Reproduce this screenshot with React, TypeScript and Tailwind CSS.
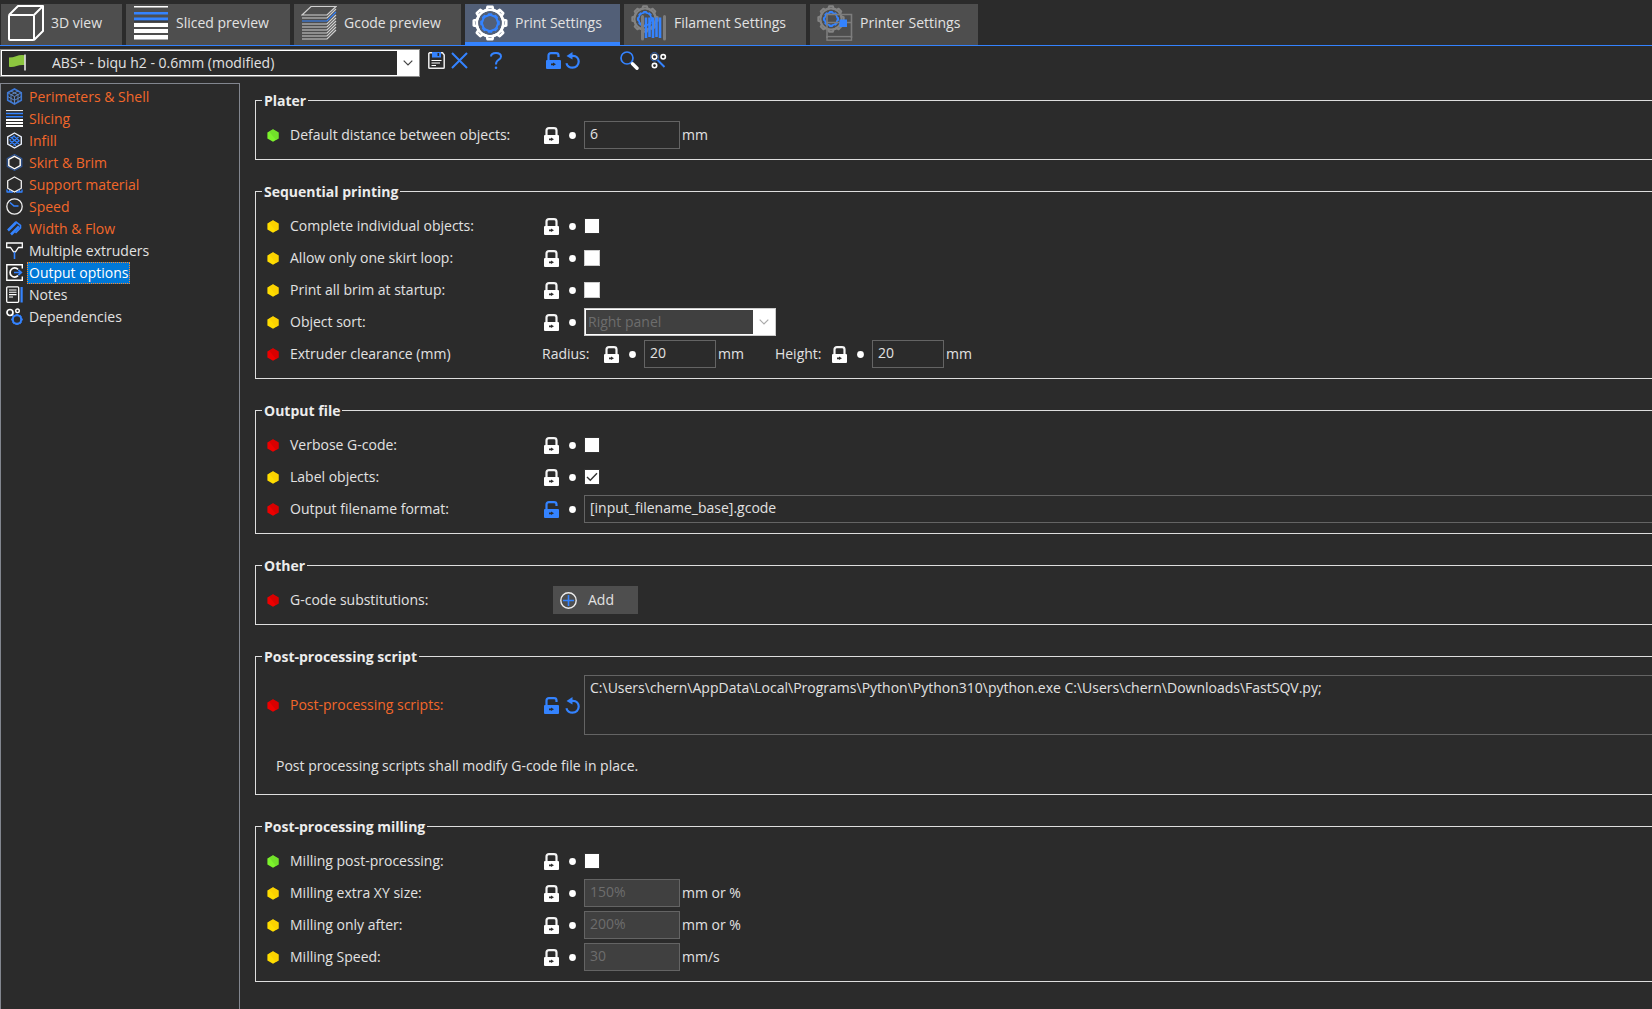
import { useState, type ReactNode } from "react"
import clsx from "clsx"

const BLUE = "#3483ff"

/* ---------- small icons ---------- */

const LockIcon = ({ open }: { open?: boolean }) => (
  <svg width="15" height="17" viewBox="0 0 15 17" fill="none">
    <path
      d={open ? "M2.5 8V3.5Q2.5 1.2 5 1.2H10Q12.5 1.2 12.5 3.5V5" : "M2.5 8V3.5Q2.5 1.2 5 1.2H10Q12.5 1.2 12.5 3.5V8"}
      stroke={open ? BLUE : "#f4f4f4"}
      strokeWidth="2.2"
    />
    <rect y="8" width="15" height="9" rx="1" fill={open ? BLUE : "#fff"} />
    <path d="M5 11.5H7V10.5L10 12.3L7 14V13.2H5Z" fill="#2b2b2b" />
  </svg>
)

const UndoIcon = () => (
  <svg width="15" height="17" viewBox="0 0 15 17" fill="none">
    <path d="M5 3.8H8C11.5 3.8 13.7 6.4 13.7 9.6C13.7 13 11 15.7 7.6 15.7C4.6 15.7 2.2 13.8 1.4 11.2" stroke={BLUE} strokeWidth="2.2" />
    <path d="M1.5 4L7.5 0V7.6Z" fill={BLUE} />
  </svg>
)

const DotIcon = () => (
  <svg width="7" height="7" viewBox="0 0 7 7">
    <circle cx="3.5" cy="3.5" r="3.4" fill="#fff" />
  </svg>
)

const modeColors = {
  simple: ["#7cf32c", "#6cd62a"],
  advanced: ["#ffdd00", "#f8cc00"],
  expert: ["#ee0000", "#cc0000"],
}

type Mode = keyof typeof modeColors

const ModeIcon = ({ mode }: { mode: Mode }) => (
  <svg width="12" height="13" viewBox="0 0 12 13" className="shrink-0">
    <path d="M6 0.3L11.6 3.4V9.6L6 12.7L0.4 9.6V3.4Z" fill={modeColors[mode][0]} />
    <path d="M6 0.3L11.6 3.4V9.6L9 11L2 2.5Z" fill={modeColors[mode][1]} opacity="0.6" />
  </svg>
)

const Chevron = ({ color }: { color: string }) => (
  <svg width="10" height="6" viewBox="0 0 10 6" fill="none">
    <path d="M0.7 0.7L5 5L9.3 0.7" stroke={color} strokeWidth="1.2" />
  </svg>
)

/* ---------- tab icons ---------- */

const gearPath = (cx: number, cy: number, r: number, tooth: number) => {
  const points: string[] = []
  for (let i = 0; i < 8; i++) {
    const base = (i * Math.PI) / 4
    const steps: [number, number][] = [[-0.24, r], [-0.15, r + tooth], [0.15, r + tooth], [0.24, r]]
    steps.forEach(([a, d]) => {
      points.push(`${(cx + Math.sin(base + a) * d).toFixed(2)} ${(cy - Math.cos(base + a) * d).toFixed(2)}`)
    })
  }
  return `M${points.join("L")}Z`
}

const CubeTabIcon = () => (
  <svg width="36" height="36" viewBox="0 0 36 36" fill="none" stroke="#fff" strokeWidth="2" strokeLinejoin="round">
    <rect x="1" y="10" width="25" height="25" rx="1" />
    <path d="M1 10L10 1H35L26 10M35 1V26L26 35" />
  </svg>
)

const SlicedTabIcon = () => (
  <svg width="36" height="36" viewBox="0 0 36 36">
    <path d="M1 1H35V2.4H1ZM1 18H35V22H1ZM1 24H35V28H1ZM1 30H35V34.5H1Z" fill="#fff" />
    <path d="M1 7H35V9.4H1ZM1 12.6H35V15.6H1Z" fill={BLUE} />
    <path d="M1 15.6H35V16.6H1Z" fill="#111" opacity="0.5" />
  </svg>
)

const GcodeTabIcon = () => (
  <svg width="36" height="36" viewBox="0 0 36 36" fill="none" stroke="#d0d0d0" strokeWidth="1.2">
    <path d="M1 10L10 1.5H35L26 10Z" />
    {[13, 19, 22, 25, 28, 31, 34].map(y => (
      <path key={y} d={`M1 ${y}H26L35 ${y - 9}`} />
    ))}
    <path d="M1 16H26L35 7" stroke={BLUE} />
  </svg>
)

const PrintTabIcon = () => (
  <svg width="36" height="36" viewBox="0 0 36 36" fill="none">
    <path d={gearPath(18, 18, 13.4, 3)} stroke="#fff" strokeWidth="2.6" strokeLinejoin="round" />
    <circle cx="18" cy="18" r="13.2" stroke="#fff" strokeWidth="2.6" />
    <path d={gearPath(18, 18, 7.8, 1.2)} stroke={BLUE} strokeWidth="1.8" strokeLinejoin="round" />
    <circle cx="18" cy="18" r="7.8" stroke={BLUE} strokeWidth="1.6" />
  </svg>
)

const SmallGears = () => (
  <>
    <path d={gearPath(14, 14, 10.8, 2)} stroke="#848484" strokeWidth="2" strokeLinejoin="round" />
    <circle cx="14" cy="14" r="10.6" stroke="#848484" strokeWidth="2" />
    <path d={gearPath(14, 14, 6.4, 1)} stroke={BLUE} strokeWidth="1.4" />
    <circle cx="14" cy="14" r="6.4" stroke={BLUE} strokeWidth="1.2" />
  </>
)

const FilamentTabIcon = () => (
  <svg width="36" height="36" viewBox="0 0 36 36" fill="none">
    <SmallGears />
    <path d="M11.5 11.5V34M33.5 11.5V34" stroke="#7d7d7d" strokeWidth="3" strokeLinecap="round" />
    <path d="M15 12.5V33M18.5 12.5V32M22 12.5V33M25.5 12.5V32M29 12.5V33" stroke={BLUE} strokeWidth="2.6" />
  </svg>
)

const PrinterTabIcon = () => (
  <svg width="36" height="36" viewBox="0 0 36 36" fill="none">
    <SmallGears />
    <path d="M10 33V9.5H34.5V33M10 17.5H34.5" stroke="#7d7d7d" strokeWidth="1.6" />
    <rect x="10" y="31.6" width="24.5" height="3.6" stroke="#7d7d7d" strokeWidth="1.4" />
    <rect x="22.5" y="14.5" width="7.5" height="7.5" fill={BLUE} />
  </svg>
)

/* ---------- page list icons ---------- */

const hexagon = "M8.5 1L15.3 4.8V12.2L8.5 16L1.7 12.2V4.8Z"

const pageIcons: Record<string, ReactNode> = {
  perimeters: (
    <>
      <path d={hexagon} stroke="#3b78d8" strokeWidth="1.6" />
      <path d="M1.7 4.8L8.5 8.5L15.3 4.8M8.5 8.5V16M5 3L12 6.8M12 3L5 6.8V14M12 6.8V14M1.7 8.5L8.5 12.3L15.3 8.5" stroke="#5d84bf" />
    </>
  ),
  slicing: (
    <>
      <path d="M0 0.6H17" stroke="#fff" />
      <path d="M0 3.5H17M0 6.8H17" stroke={BLUE} strokeWidth="1.6" />
      <path d="M0 10H17M0 13H17M0 16H17" stroke="#fff" strokeWidth="2" />
    </>
  ),
  infill: (
    <>
      <path d={hexagon} stroke="#e8eefa" strokeWidth="1.4" />
      <path d="M4.5 5L13 12M3.8 8.5L10 13.8M7.5 3.8L13.5 9M12.5 5L4 12M8.5 3.5L3.5 8M13.5 8.5L7.5 13.5" stroke={BLUE} strokeWidth="1.2" />
    </>
  ),
  skirt: (
    <>
      <path d="M8.5 0.6L15.8 4.6V12.4L8.5 16.4L1.2 12.4V4.6Z" stroke="#2f5aa0" strokeWidth="1.1" />
      <path d="M8.5 2.4L14.2 5.5V11.7L8.5 14.8L2.8 11.7V5.5Z" stroke="#fff" strokeWidth="1.4" />
    </>
  ),
  support: (
    <>
      <path d="M1 16.5V13.5M3.6 16.5V14M6.2 16.5V15M10.8 16.5V15M13.4 16.5V14M16 16.5V13.5M1 16H7M10 16H16" stroke={BLUE} strokeWidth="1.3" />
      <path d={hexagon} stroke="#f2f2f2" strokeWidth="1.3" />
    </>
  ),
  speed: (
    <>
      <circle cx="8.5" cy="8.5" r="7.7" stroke="#f0f0f0" strokeWidth="1.3" />
      <path d="M4 4.5L8 8H12.5" stroke={BLUE} strokeWidth="1.5" />
    </>
  ),
  width: (
    <>
      <path d="M2 10.5L10 2.5M5 14.5L13 6.5" stroke={BLUE} strokeWidth="2.6" />
      <path d="M9.5 1.5L14.5 5.5V8L9.5 13" stroke={BLUE} strokeWidth="1.6" />
    </>
  ),
  extruders: (
    <>
      <path d="M0.7 1H16.3V5.5H12.5L9.5 9.8H7.5L4.5 5.5H0.7Z" stroke="#fff" strokeWidth="1.3" />
      <path d="M8.5 10V17" stroke={BLUE} strokeWidth="1.6" />
    </>
  ),
  output: (
    <>
      <path d="M16.3 4.5V0.8H0.8V16.2H16.3V12.5" stroke="#fff" strokeWidth="1.4" />
      <path d="M12 5.3A4.6 4.6 0 1 0 12 11.7" stroke="#fff" strokeWidth="1.7" />
      <path d="M8 8.5H15M12.3 5.8L15.3 8.5L12.3 11.2" stroke={BLUE} strokeWidth="1.7" />
    </>
  ),
  notes: (
    <>
      <rect x="0.7" y="0.8" width="12" height="15.5" rx="1" stroke="#fff" strokeWidth="1.3" />
      <path d="M3 4H10.5M3 6.3H10.5M3 8.6H10.5M3 11H7" stroke="#fff" strokeWidth="1.1" />
      <path d="M15.6 1V16.5" stroke={BLUE} strokeWidth="2.2" />
    </>
  ),
  dependencies: (
    <>
      <circle cx="4" cy="4.5" r="3" stroke="#fff" strokeWidth="1.7" />
      <circle cx="11.5" cy="2.8" r="1.8" stroke="#fff" strokeWidth="1.4" />
      <circle cx="11" cy="11.5" r="4.2" stroke={BLUE} strokeWidth="2" />
      <path d={gearPath(11, 11.5, 4.4, 0.9)} stroke={BLUE} strokeWidth="1" />
    </>
  ),
}

const tabs = [
  { label: "3D view", icon: <CubeTabIcon />, width: "w-[121px]" },
  { label: "Sliced preview", icon: <SlicedTabIcon />, width: "w-[164px]" },
  { label: "Gcode preview", icon: <GcodeTabIcon />, width: "w-[167px]" },
  { label: "Print Settings", icon: <PrintTabIcon />, width: "w-[155px]" },
  { label: "Filament Settings", icon: <FilamentTabIcon />, width: "w-[182px]" },
  { label: "Printer Settings", icon: <PrinterTabIcon />, width: "w-[168px]" },
]

const pages = [
  { label: "Perimeters & Shell", icon: "perimeters", modified: true },
  { label: "Slicing", icon: "slicing", modified: true },
  { label: "Infill", icon: "infill", modified: true },
  { label: "Skirt & Brim", icon: "skirt", modified: true },
  { label: "Support material", icon: "support", modified: true },
  { label: "Speed", icon: "speed", modified: true },
  { label: "Width & Flow", icon: "width", modified: true },
  { label: "Multiple extruders", icon: "extruders" },
  { label: "Output options", icon: "output" },
  { label: "Notes", icon: "notes" },
  { label: "Dependencies", icon: "dependencies" },
]

/* ---------- form parts ---------- */

const Group = ({ title, children }: { title: string; children: ReactNode }) => (
  <fieldset className="mb-[22px] min-w-0 border border-r-0 border-[#dedede] pb-2">
    <legend className="ml-[6px] h-[19px] px-0.5 font-bold leading-[19px] text-[#ececec]">{title}</legend>
    <div className="pt-[9px]">{children}</div>
  </fieldset>
)

interface RowProps {
  id?: string
  label: string
  mode: Mode
  modified?: boolean
  tall?: boolean
  children: ReactNode
}

const Row = ({ id, label, mode, modified, tall, children }: RowProps) => (
  <div className={clsx("flex items-center pl-[11px]", tall ? "h-[60px]" : "h-8")}>
    <ModeIcon mode={mode} />
    <label htmlFor={id} className={clsx("ml-[11px] w-[252px] shrink-0", modified && "text-[#f2672a]")}>
      {label}
    </label>
    {children}
  </div>
)

const Marks = ({ unlocked, undo }: { unlocked?: boolean; undo?: boolean }) => (
  <div className="ml-0.5 flex w-10 shrink-0 items-center">
    <button type="button" aria-label="Lock value">
      <LockIcon open={unlocked} />
    </button>
    {undo ? (
      <button type="button" aria-label="Revert value" className="ml-[6px]">
        <UndoIcon />
      </button>
    ) : (
      <span className="ml-[10px]">
        <DotIcon />
      </span>
    )}
  </div>
)

const TextField = ({ id, value, wide, disabled }: { id: string; value: string; wide?: string; disabled?: boolean }) => (
  <input
    id={id}
    type="text"
    defaultValue={value}
    disabled={disabled}
    className={clsx(
      "h-7 border border-[#646464] pb-1 pl-[5px] leading-5 outline-none",
      disabled ? "bg-[#404040] text-[#6d6d6d]" : "bg-transparent",
      wide ?? "w-24"
    )}
  />
)

const CheckBox = ({ id, checked, disabled }: { id: string; checked?: boolean; disabled?: boolean }) => (
  <span className="relative flex">
    <input
      id={id}
      type="checkbox"
      defaultChecked={checked}
      disabled={disabled}
      className="peer size-4 appearance-none border border-[#333333] bg-white disabled:border-[#cccccc]"
    />
    <svg className="pointer-events-none absolute inset-0 hidden peer-checked:block" width="16" height="16" viewBox="0 0 16 16" fill="none">
      <path d="M3 8L6.3 11.3L13 4.2" stroke="#333" strokeWidth="1.4" />
    </svg>
  </span>
)

const Unit = ({ children }: { children: ReactNode }) => <span className="ml-0.5 shrink-0">{children}</span>

const Toolbar = () => (
  <div className="flex h-[37px] items-start pt-[3px]">
    <div className="relative w-[420px] shrink-0 border border-[#8c8c8c] bg-white p-px">
      <select aria-label="Print preset" className="block h-6 w-full appearance-none bg-[#2b2b2b] pl-[50px] leading-6 outline-none">
        <option>ABS+ - biqu h2 - 0.6mm (modified)</option>
      </select>
      <svg className="pointer-events-none absolute left-2 top-1" width="18" height="17" viewBox="0 0 18 17">
        <path d="M0 3.5Q4 3.5 7 2.2Q11 0.6 15.5 1.2V11Q11 10.5 7.5 12Q4 13.4 0 12.8Z" fill="#8cc63f" />
        <path d="M16 0.5V16.5" stroke="#fff" strokeWidth="1.4" />
      </svg>
      <span className="pointer-events-none absolute inset-y-0 right-0 flex w-[22px] items-center justify-center bg-white">
        <Chevron color="#444" />
      </span>
    </div>
    <div className="flex h-5 items-center pt-0.5">
      <button type="button" aria-label="Save preset" className="ml-2">
        <svg width="17" height="17" viewBox="0 0 17 17" fill="none">
          <path d="M0.8 1.6V15.4Q0.8 16.2 1.6 16.2H15.4Q16.2 16.2 16.2 15.4V3L14.5 0.8H1.6Z" stroke="#ececec" strokeWidth="1.5" />
          <rect x="4" y="0" width="9" height="5.5" fill={BLUE} />
          <rect x="9.5" y="1" width="1.6" height="3" fill="#2b2b2b" />
          <path d="M3.5 8.5H13.5M3.5 11H12M3.5 13.5H8" stroke="#fff" strokeWidth="1.2" />
        </svg>
      </button>
      <button type="button" aria-label="Delete preset" className="ml-[6px]">
        <svg width="17" height="17" viewBox="0 0 17 17" fill="none">
          <path d="M1 1L16 16M16 1L1 16" stroke={BLUE} strokeWidth="2" />
        </svg>
      </button>
      <button type="button" aria-label="Help" className="ml-[22px]">
        <svg width="12" height="17" viewBox="0 0 12 17" fill="none">
          <path d="M1 4.5Q1 1 6 1Q11 1 11 4.5Q11 6.6 8.3 8Q6 9.3 6 12.5" stroke={BLUE} strokeWidth="2" />
          <circle cx="6" cy="15.7" r="1.3" fill={BLUE} />
        </svg>
      </button>
      <button type="button" aria-label="Unlock all values" className="ml-11">
        <LockIcon open />
      </button>
      <button type="button" aria-label="Revert all values" className="ml-1">
        <UndoIcon />
      </button>
      <button type="button" aria-label="Search" className="ml-10">
        <svg width="19" height="19" viewBox="0 0 19 19" fill="none">
          <circle cx="7" cy="7" r="6" stroke={BLUE} strokeWidth="1.7" />
          <path d="M12.5 12.8L17 17.3" stroke="#fff" strokeWidth="3.4" strokeLinecap="round" />
        </svg>
      </button>
      <button type="button" aria-label="Compare presets" className="ml-[11px]">
        <svg width="17" height="17" viewBox="0 0 17 17" fill="none">
          <circle cx="4.5" cy="4.8" r="4.2" stroke="#2f62b5" strokeWidth="1" />
          <path d="M7.5 8L14.5 15" stroke={BLUE} strokeWidth="2" />
          <circle cx="4.5" cy="4.8" r="2.3" stroke="#fff" strokeWidth="1.6" />
          <circle cx="13.2" cy="4.8" r="2.2" stroke="#fff" strokeWidth="1.6" />
          <circle cx="4.5" cy="13.6" r="2.2" stroke="#fff" strokeWidth="1.6" />
        </svg>
      </button>
    </div>
  </div>
)

const App = () => {
  const [activeTab, setActiveTab] = useState("Print Settings")
  const [activePage, setActivePage] = useState("Output options")

  return (
    <div className="flex min-h-screen flex-col overflow-hidden bg-[#2b2b2b] font-['Open_Sans','Noto_Sans',sans-serif] text-sm leading-5 text-[#e2e2e2]">
      <nav className="flex gap-1 border-b border-[#3483ff] pl-px pt-1">
        {tabs.map(tab => (
          <button
            key={tab.label}
            type="button"
            onClick={() => setActiveTab(tab.label)}
            className={clsx(
              "flex h-[41px] shrink-0 items-center gap-[7px] whitespace-nowrap border-b-[3px] pl-[7px]",
              tab.width,
              activeTab === tab.label ? "border-[#3483ff] bg-[#525f77]" : "border-[#4e4e4e] bg-[#4e4e4e]"
            )}
          >
            {tab.icon}
            {tab.label}
          </button>
        ))}
      </nav>

      <Toolbar />

      <div className="flex flex-1">
        <aside className="w-60 shrink-0 border border-b-0 border-[#82868f] pt-0.5">
          <ul>
            {pages.map(page => (
              <li key={page.label} className="flex h-[22px] items-center pl-[5px]">
                <svg width="17" height="17" viewBox="0 0 17 17" fill="none" className="mb-0.5">
                  {pageIcons[page.icon]}
                </svg>
                <button
                  type="button"
                  onClick={() => setActivePage(page.label)}
                  className={clsx(
                    "ml-1 h-[22px] whitespace-nowrap border border-dotted px-px",
                    activePage === page.label ? "border-[#ff8728] bg-[#0078d7] text-white" : "border-transparent",
                    page.modified && activePage !== page.label && "text-[#f2672a]"
                  )}
                >
                  {page.label}
                </button>
              </li>
            ))}
          </ul>
        </aside>

        <main className="min-w-0 flex-1 pl-[15px] pt-2">
          <Group title="Plater">
            <Row id="distance" label="Default distance between objects:" mode="simple">
              <Marks />
              <TextField id="distance" value="6" />
              <Unit>mm</Unit>
            </Row>
          </Group>

          <Group title="Sequential printing">
            <Row id="complete" label="Complete individual objects:" mode="advanced">
              <Marks />
              <CheckBox id="complete" />
            </Row>
            <Row id="skirt-loop" label="Allow only one skirt loop:" mode="advanced">
              <Marks />
              <CheckBox id="skirt-loop" disabled />
            </Row>
            <Row id="brim" label="Print all brim at startup:" mode="advanced">
              <Marks />
              <CheckBox id="brim" disabled />
            </Row>
            <Row id="sort" label="Object sort:" mode="advanced">
              <Marks />
              <div className="relative w-48 border border-[#cccccc] bg-white p-px">
                <select id="sort" disabled className="block h-6 w-full appearance-none bg-[#404040] pl-0.5 leading-6 text-[#6d6d6d] opacity-100">
                  <option>Right panel</option>
                </select>
                <span className="pointer-events-none absolute inset-y-0 right-0 flex w-[22px] items-center justify-center bg-white">
                  <Chevron color="#aaa" />
                </span>
              </div>
            </Row>
            <Row label="Extruder clearance (mm)" mode="expert">
              <label htmlFor="radius" className="w-[60px]">Radius:</label>
              <Marks />
              <TextField id="radius" value="20" wide="w-[72px]" />
              <Unit>mm</Unit>
              <label htmlFor="height" className="ml-[31px] w-[55px]">Height:</label>
              <Marks />
              <TextField id="height" value="20" wide="w-[72px]" />
              <Unit>mm</Unit>
            </Row>
          </Group>

          <Group title="Output file">
            <Row id="verbose" label="Verbose G-code:" mode="expert">
              <Marks />
              <CheckBox id="verbose" />
            </Row>
            <Row id="label-objects" label="Label objects:" mode="advanced">
              <Marks />
              <CheckBox id="label-objects" checked />
            </Row>
            <Row id="filename" label="Output filename format:" mode="expert">
              <Marks unlocked />
              <TextField id="filename" value="[input_filename_base].gcode" wide="min-w-0 flex-1 border-r-0" />
            </Row>
          </Group>

          <Group title="Other">
            <Row label="G-code substitutions:" mode="expert">
              <button type="button" className="ml-[11px] flex h-7 w-[85px] items-center gap-[11px] bg-[#4e4e4e] pl-[7px]">
                <svg width="17" height="17" viewBox="0 0 17 17" fill="none">
                  <circle cx="8.5" cy="8.5" r="7.7" stroke="#ececec" strokeWidth="1.4" />
                  <path d="M8.5 3V14M3 8.5H14" stroke={BLUE} strokeWidth="1.6" />
                </svg>
                Add
              </button>
            </Row>
          </Group>

          <Group title="Post-processing script">
            <Row id="scripts" label="Post-processing scripts:" mode="expert" modified tall>
              <Marks unlocked undo />
              <textarea
                id="scripts"
                defaultValue="C:\Users\chern\AppData\Local\Programs\Python\Python310\python.exe C:\Users\chern\Downloads\FastSQV.py;"
                className="h-[60px] min-w-0 flex-1 resize-none border border-r-0 border-[#646464] bg-transparent pl-[5px] pt-0.5 leading-5 outline-none"
              />
            </Row>
            <p className="h-[51px] pl-5 pt-[21px]">Post processing scripts shall modify G-code file in place.</p>
          </Group>

          <Group title="Post-processing milling">
            <Row id="milling" label="Milling post-processing:" mode="simple">
              <Marks />
              <CheckBox id="milling" />
            </Row>
            <Row id="milling-xy" label="Milling extra XY size:" mode="advanced">
              <Marks />
              <TextField id="milling-xy" value="150%" disabled />
              <Unit>mm or %</Unit>
            </Row>
            <Row id="milling-after" label="Milling only after:" mode="advanced">
              <Marks />
              <TextField id="milling-after" value="200%" disabled />
              <Unit>mm or %</Unit>
            </Row>
            <Row id="milling-speed" label="Milling Speed:" mode="advanced">
              <Marks />
              <TextField id="milling-speed" value="30" disabled />
              <Unit>mm/s</Unit>
            </Row>
          </Group>
        </main>
      </div>
    </div>
  )
}

export default App
